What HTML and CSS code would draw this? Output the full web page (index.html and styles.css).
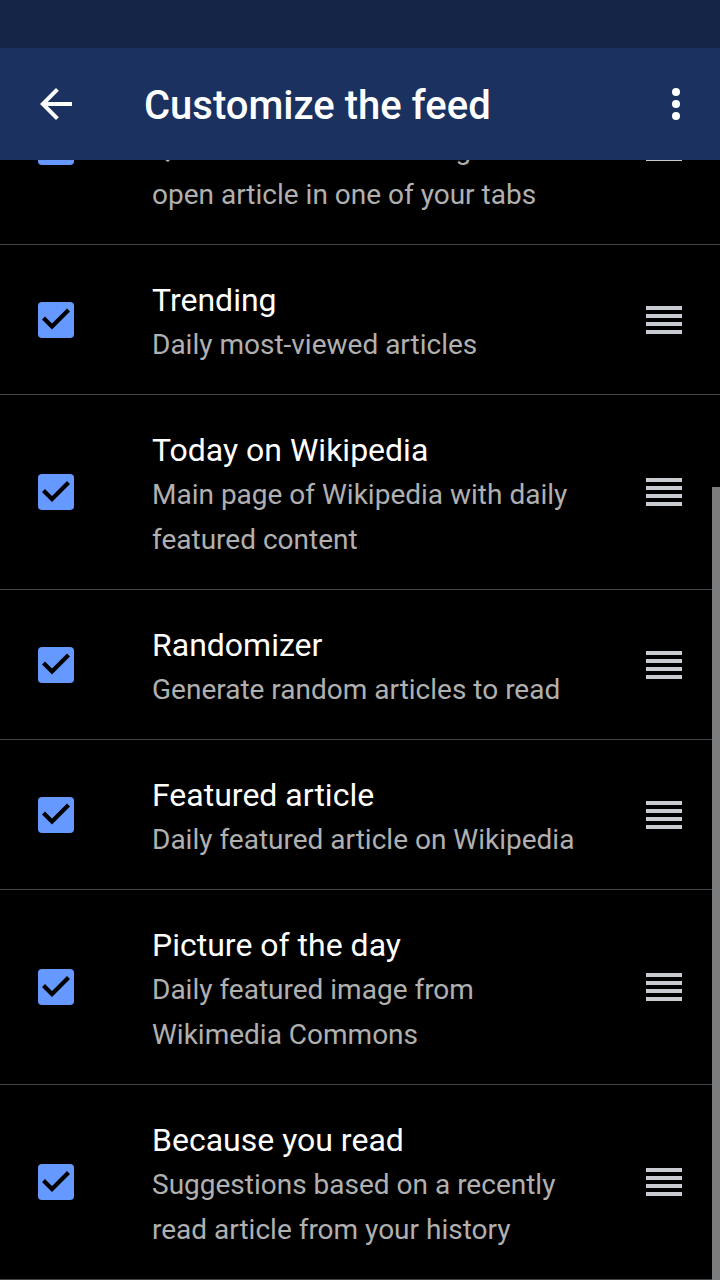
FILE: index.html
```html
<!DOCTYPE html>
<html lang="en">
<head>
<meta charset="utf-8">
<meta name="viewport" content="width=device-width, initial-scale=1">
<title>Customize the feed</title>
<link rel="stylesheet" href="styles.css">
</head>
<body>
<svg class="sprite" aria-hidden="true">
  <symbol id="drag" viewBox="0 0 36 28"><path d="M0 0h36v4H0zM0 8h36v4H0zM0 16h36v4H0zM0 24h36v4H0z"/></symbol>
</svg>
<div class="screen">
  <header class="header">
    <div class="status-bar"></div>
    <div class="toolbar">
      <button class="icon-button" type="button" aria-label="Back">
        <svg class="icon" viewBox="0 0 24 24"><path d="M20 11H7.83l5.59-5.59L12 4l-8 8 8 8 1.41-1.41L7.83 13H20z"/></svg>
      </button>
      <h1 class="title">Customize the feed</h1>
      <button class="icon-button" type="button" aria-label="More options">
        <svg class="icon" viewBox="0 0 24 24"><circle cx="12" cy="6" r="2"/><circle cx="12" cy="12" r="2"/><circle cx="12" cy="18" r="2"/></svg>
      </button>
    </div>
  </header>
  <main class="content">
    <ul class="list">
      <li class="row">
        <input class="check" type="checkbox" id="continue" checked>
        <label class="text" for="continue"><span class="name">Continue reading</span><span class="desc">Quick link back to reading an open article in one of your tabs</span></label>
        <button class="handle" type="button" aria-label="Reorder"><svg class="drag"><use href="#drag"/></svg></button>
      </li>
      <li class="row">
        <input class="check" type="checkbox" id="trending" checked>
        <label class="text" for="trending"><span class="name">Trending</span><span class="desc">Daily most-viewed articles</span></label>
        <button class="handle" type="button" aria-label="Reorder"><svg class="drag"><use href="#drag"/></svg></button>
      </li>
      <li class="row">
        <input class="check" type="checkbox" id="today" checked>
        <label class="text" for="today"><span class="name">Today on Wikipedia</span><span class="desc">Main page of Wikipedia with daily featured content</span></label>
        <button class="handle" type="button" aria-label="Reorder"><svg class="drag"><use href="#drag"/></svg></button>
      </li>
      <li class="row">
        <input class="check" type="checkbox" id="random" checked>
        <label class="text" for="random"><span class="name">Randomizer</span><span class="desc">Generate random articles to read</span></label>
        <button class="handle" type="button" aria-label="Reorder"><svg class="drag"><use href="#drag"/></svg></button>
      </li>
      <li class="row">
        <input class="check" type="checkbox" id="featured" checked>
        <label class="text" for="featured"><span class="name">Featured article</span><span class="desc">Daily featured article on Wikipedia</span></label>
        <button class="handle" type="button" aria-label="Reorder"><svg class="drag"><use href="#drag"/></svg></button>
      </li>
      <li class="row">
        <input class="check" type="checkbox" id="picture" checked>
        <label class="text" for="picture"><span class="name">Picture of the day</span><span class="desc">Daily featured image from Wikimedia Commons</span></label>
        <button class="handle" type="button" aria-label="Reorder"><svg class="drag"><use href="#drag"/></svg></button>
      </li>
      <li class="row">
        <input class="check" type="checkbox" id="because" checked>
        <label class="text" for="because"><span class="name">Because you read</span><span class="desc">Suggestions based on a recently read article from your history</span></label>
        <button class="handle" type="button" aria-label="Reorder"><svg class="drag"><use href="#drag"/></svg></button>
      </li>
    </ul>
    <div class="scroll-thumb"></div>
  </main>
</div>
</body>
</html>
```
FILE: styles.css
```css
* { box-sizing: border-box; }
body {
  margin: 0;
  background: #000;
  color: #fff;
  font-family: Roboto, "Noto Sans", sans-serif;
}
.sprite { display: none; }
button {
  display: flex;
  flex: none;
  padding: 0;
  border: 0;
  background: none;
  color: inherit;
}
.screen {
  display: flex;
  flex-direction: column;
  height: 100vh;
}
.header { flex: none; background: #1b3160; }
.status-bar { height: 48px; background: #152548; }
.toolbar {
  display: flex;
  align-items: center;
  padding: 32px 20px 32px 32px;
}
.icon { width: 48px; height: 48px; fill: #fff; }
.title {
  flex: 1;
  margin: 4px 0 0 64px;
  font-size: 40px;
  line-height: 48px;
  font-weight: 500;
}
.toolbar { height: 112px; }
/* The list is shown at the end of its scroll range. */
.content {
  position: relative;
  display: flex;
  flex: 1;
  flex-direction: column;
  justify-content: flex-end;
  min-height: 0;
  overflow: hidden;
}
.list { margin: 0; padding: 0; list-style: none; }
.row {
  display: flex;
  align-items: center;
  padding: 0 38px;
  border-bottom: 1px solid #444648;
}
.check {
  flex: none;
  width: 36px;
  height: 36px;
  margin: 0;
  appearance: none;
  border-radius: 4px;
  background: #69f;
}
.check:checked::before {
  content: "";
  display: block;
  width: 36px;
  height: 36px;
  background: #000;
  clip-path: polygon(14px 28px, 4px 18px, 7px 15px, 14px 22px, 29px 7px, 32px 10px);
}
.text { flex: 1; padding: 33px 70px 27px 78px; }
.name, .desc { display: block; }
.name { font-size: 32px; line-height: 44px; }
.desc { font-size: 28px; line-height: 45px; color: #b0b0b0; }
.drag { width: 36px; height: 28px; fill: #c8ccd1; }
.scroll-thumb {
  position: absolute;
  right: 0;
  bottom: 0;
  width: 8px;
  height: 70.8%;
  background: #7b7c7e;
}
```
